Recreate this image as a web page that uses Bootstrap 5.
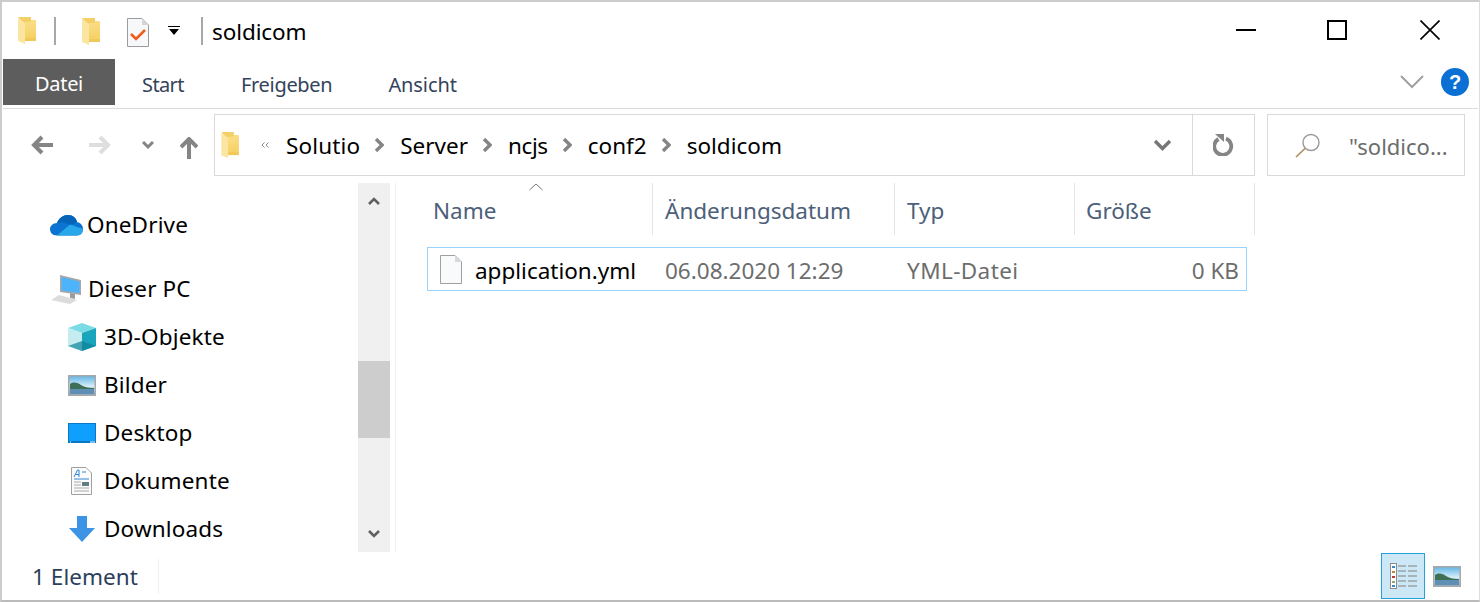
<!DOCTYPE html>
<html lang="de">
<head>
<meta charset="utf-8">
<title>soldicom</title>
<link href="https://cdn.jsdelivr.net/npm/bootstrap@5.3.0/dist/css/bootstrap.min.css" rel="stylesheet">
<style>
html,body{height:602px;overflow:hidden;background:#fff}
body{font-family:"Noto Sans","Open Sans",sans-serif;font-size:22.5px;line-height:30px;color:#000}
.win{width:1480px;height:602px;border-top:2px solid #ccc;border-left:2px solid #ccc;border-bottom:2px solid #bbb;border-right:1px solid #ddd}
svg{display:block;flex:none}
.title-row{height:57px;padding-left:16px}
.qsep{width:2px;height:28px;background:#a8a8a8}
.qsep-a{margin-left:17px}
.qsep-b{margin-left:21px}
.qf2{margin-left:26px;margin-top:3px}
.qdoc{margin-left:26px;margin-top:3px}
.qmenu{margin-left:19px}
.title-txt{margin-left:9px;padding-top:2px;letter-spacing:-.1px}
.winbtns{margin-top:-1px}
.wb-max{margin-left:71px}
.wb-close{margin-left:73px;margin-right:39px}
.tabs{height:46px;padding-left:1px}
.rtab{font-size:20px;color:#33435a;height:46px;padding-top:5px;display:flex;align-items:center;justify-content:center}
.rtab-file{width:112px;background:#5d5d5d;color:#fff;padding-top:3px;letter-spacing:-.3px}
.rt-start{margin-left:27px;letter-spacing:-.6px}
.rt-share{margin-left:57px;letter-spacing:-.3px}
.rt-view{margin-left:56px;letter-spacing:-.1px}
.ribbon-end{margin-right:10px}
.help{margin-left:17px}
.rule{height:1px;background:#dcdcdc;margin:3px 0 0 1px;width:1475px}
.addr-row{height:74px;padding-top:5px}
.navzone{width:212px;height:62px}
.nb-back{margin-left:29px}
.nb-fwd{margin-left:36px}
.nb-more{margin-left:31px}
.nb-up{margin-left:26px;margin-top:6px}
.addr{width:1041px;height:62px;border:1px solid #d9d9d9;padding-left:6px}
.crumb{padding-top:1px}
.crumb-first{margin-left:17px;letter-spacing:.15px}
.crumb-next{margin-left:16px}
.crumb-tight{letter-spacing:-.4px}
.crumb-sep{margin-left:14px}
.dbl{margin-left:21px}
.refresh{width:62px;height:60px;border-left:1px solid #d9d9d9;margin-left:20px}
.search{width:198px;height:62px;border:1px solid #d9d9d9;margin-left:12px;padding-left:27px;color:#6d6d6d;font-size:22px}
.search-txt{margin-left:28px;padding-top:2px}
.body-row{height:369px}
.side{width:356px;padding-top:18px}
.side-item{height:48px;letter-spacing:.15px}
.side-top{padding-left:48px}
.side-sub{padding-left:66px}
.side-gap{margin-top:16px}
.lbl-one{margin-left:4px}
.lbl-pc{margin-left:5px}
.lbl-sub{margin-left:8px}
.ic-doc{margin-left:3px}
.lbl-doc{margin-left:12px}
.ic-dl{margin-left:1px}
.lbl-dl{margin-left:9px}
.sbar{width:32px;background:#f0f0f0}
.sbar-btn{height:36px}
.sbar-thumb{height:77px;background:#cdcdcd;margin-top:142px}
.sbar-fill{flex:1}
.main{padding-left:31px;position:relative;border-left:1px solid #f0f0f0;margin-left:5px}
.hdr{height:52px;color:#4c607a;margin-left:-6px}
.hcell{height:52px;border-right:1px solid #e5e5e5;padding-left:12px;padding-top:13px}
.w1{width:232px}.w2{width:242px}.w3{width:180px}.w4{width:180px;padding-left:11px}
.caret-sort{position:absolute;left:133px;top:0}
.file-row{width:820px;height:44px;margin-top:12px;border:1px solid #99d1ff;padding-left:12px}
.ftext{padding-top:3px}
.fname{width:190px;margin-left:13px}
.fdate{width:242px;color:#6d6d6d}
.ftype{width:172px;color:#6d6d6d;letter-spacing:.4px}
.fsize{width:160px;text-align:right;color:#6d6d6d}
.status{height:48px;padding-left:30px;color:#2b3f5c;letter-spacing:.05px}
.stat-txt{width:127px;height:35px;border-right:1px solid #f0f0f0;display:flex;align-items:center;padding-top:2px}
.view-on{width:44px;height:46px;background:#cce8f6;border:1px solid #26a0da;display:flex;align-items:center;justify-content:center}
.view-gap{margin-right:18px;margin-left:8px}
</style>
</head>
<body>
<svg width="0" height="0" class="position-absolute">
  <defs>
    <linearGradient id="sky" x1="0" y1="0" x2="0" y2="1"><stop offset="0" stop-color="#5fb4e6"/><stop offset=".55" stop-color="#d9eef7"/><stop offset="1" stop-color="#7fa9c8"/></linearGradient>
    <linearGradient id="fold" x1="0" y1="0" x2="0" y2="1"><stop offset="0" stop-color="#fadd85"/><stop offset="1" stop-color="#f5d062"/></linearGradient>
    <symbol id="folder" viewBox="0 0 19 28"><path d="M0 0H13V4H18V23H7V8Z" fill="#f3cf68"/><path d="M13 3H18V23H8Z" fill="url(#fold)"/><path d="M7 5H13V23H7Z" fill="url(#fold)"/><path d="M0 1 7 6V27L0 24Z" fill="#fce5a0"/><path d="M7 21H18V24H7Z" fill="#f0c95a"/></symbol>
    <symbol id="chev" viewBox="0 0 10 14"><path d="M2 1 8 7 2 13" fill="none" stroke="#858585" stroke-width="3.4"/></symbol>
    <symbol id="photo" viewBox="0 0 28 21"><rect x=".75" y=".75" width="26.5" height="19.5" fill="url(#sky)" stroke="#a8a8a8" stroke-width="1.5"/><path d="M2 9C6 6 10 8 13 10S20 13 26 13V15H2Z" fill="#3e7058"/><path d="M2 14H26V19H2Z" fill="#5f8fb4"/></symbol>
  </defs>
</svg>
<div class="win d-flex flex-column">

  <div class="title-row d-flex align-items-center">
    <svg width="19" height="28"><use href="#folder"/></svg>
    <div class="qsep qsep-a"></div>
    <svg class="qf2" width="19" height="28"><use href="#folder"/></svg>
    <svg class="qdoc" width="22" height="29" viewBox="0 0 22 29"><path d="M.5.5H15L21.5 7V28.5H.5Z" fill="#f7f8f9" stroke="#9c9c9c"/><path d="M15 .5V7H21.5Z" fill="#d5d5d5"/><path d="M4 16 9 21 18 12" fill="none" stroke="#f4591c" stroke-width="2.6"/></svg>
    <svg class="qmenu" width="12" height="10" viewBox="0 0 12 10"><path d="M0 0H12V1H0ZM1 3H11L6 9Z" fill="#000"/></svg>
    <div class="qsep qsep-b"></div>
    <div class="title-txt">soldicom</div>
    <div class="winbtns ms-auto d-flex align-items-center">
      <svg width="20" height="20" viewBox="0 0 20 20"><path d="M0 10H20" stroke="#000" stroke-width="2"/></svg>
      <svg class="wb-max" width="20" height="20" viewBox="0 0 20 20"><rect x="1" y="1" width="18" height="18" fill="none" stroke="#000" stroke-width="2"/></svg>
      <svg class="wb-close" width="20" height="20" viewBox="0 0 20 20"><path d="M.5.5 19.5 19.5M19.5.5.5 19.5" stroke="#000" stroke-width="1.6"/></svg>
    </div>
  </div>

  <div class="tabs d-flex align-items-center">
    <div class="rtab rtab-file">Datei</div>
    <div class="rtab rt-start">Start</div>
    <div class="rtab rt-share">Freigeben</div>
    <div class="rtab rt-view">Ansicht</div>
    <div class="ribbon-end ms-auto d-flex align-items-center">
      <svg width="24" height="14" viewBox="0 0 24 14"><path d="M1 1 12 12 23 1" fill="none" stroke="#a0a0a0" stroke-width="2"/></svg>
      <svg class="help" width="28" height="28" viewBox="0 0 28 28"><circle cx="14" cy="14" r="14" fill="#0a70d3"/><text x="14" y="21" text-anchor="middle" font-size="20" font-weight="700" fill="#fff" font-family="Liberation Sans">?</text></svg>
    </div>
  </div>
  <div class="rule"></div>

  <div class="addr-row d-flex">
    <div class="navzone d-flex align-items-center">
      <svg class="nb-back" width="22" height="20" viewBox="0 0 22 20"><path d="M11 2 3 10 11 18M3 10H22" fill="none" stroke="#858585" stroke-width="4"/></svg>
      <svg class="nb-fwd" width="22" height="20" viewBox="0 0 22 20"><path d="M11 2 19 10 11 18M19 10H0" fill="none" stroke="#dedede" stroke-width="4"/></svg>
      <svg class="nb-more" width="12" height="9" viewBox="0 0 12 9"><path d="M1 1 6 6 11 1" fill="none" stroke="#858585" stroke-width="3"/></svg>
      <svg class="nb-up" width="18" height="22" viewBox="0 0 18 22"><path d="M1 10 9 2 17 10M9 3V22" fill="none" stroke="#858585" stroke-width="4"/></svg>
    </div>
    <div class="addr d-flex align-items-center">
      <svg width="19" height="27"><use href="#folder"/></svg>
      <svg class="dbl" width="8" height="6" viewBox="0 0 8 6"><path d="M3.5.5 1 3 3.5 5.5M7.5.5 5 3 7.5 5.5" fill="none" stroke="#8a8a8a"/></svg>
      <div class="crumb crumb-first">Solutio</div>
      <svg class="crumb-sep" width="10" height="14"><use href="#chev"/></svg>
      <div class="crumb crumb-next">Server</div>
      <svg class="crumb-sep" width="10" height="14"><use href="#chev"/></svg>
      <div class="crumb crumb-next crumb-tight">ncjs</div>
      <svg class="crumb-sep" width="10" height="14"><use href="#chev"/></svg>
      <div class="crumb crumb-next">conf2</div>
      <svg class="crumb-sep" width="10" height="14"><use href="#chev"/></svg>
      <div class="crumb crumb-next">soldicom</div>
      <div class="ms-auto d-flex align-items-center">
        <svg width="19" height="12" viewBox="0 0 19 12"><path d="M2 2 9.5 9.5 17 2" fill="none" stroke="#777" stroke-width="3.4"/></svg>
        <div class="refresh d-flex align-items-center justify-content-center">
          <svg width="21" height="22" viewBox="0 0 21 22"><path d="M5.5 5A8.5 8.500 0 1 0 13 4.500" fill="none" stroke="#858585" stroke-width="3.800"/><path d="M2 0H11V8Z" fill="#858585"/></svg>
        </div>
      </div>
    </div>
    <div class="search d-flex align-items-center">
      <svg width="26" height="25" viewBox="0 0 26 25"><circle cx="16" cy="9.5" r="8" fill="none" stroke="#9a9a9a" stroke-width="1.4"/><path d="M10 15.5 1 24" stroke="#b08a5c" stroke-width="1.6"/></svg>
      <div class="search-txt">"soldico...</div>
    </div>
  </div>

  <div class="body-row d-flex">
    <div class="side">
      <div class="side-item side-top d-flex align-items-center">
        <svg width="33" height="21" viewBox="0 0 33 21"><path d="M7 20.5C2 20.5 0 17 0 14S3 8 7 8C9 3 13 0 18 0S26 3 27 7C31 8 33 11 33 14S31 20.500 27 20.500Z" fill="#0a74d0"/><path d="M7 8C9 3 13 0 18 0S26 3 27 7L20 10 13 7Z" fill="#0364b8"/><path d="M7 20.500H27C31 20.500 33 17 33 14L20 9.500Z" fill="#28a8ea"/></svg>
        <div class="lbl-one">OneDrive</div>
      </div>
      <div class="side-item side-top side-gap d-flex align-items-center">
        <svg width="33" height="30" viewBox="0 0 33 30"><path d="M10 1 31 6V21L10 18Z" fill="#a8a8a8"/><path d="M11.5 3 29.5 7.500V19L11.5 16.500Z" fill="#4db3fb"/><path d="M20 19V24L25 25V20Z" fill="#9c9c9c"/><path d="M9 21 1 26 20 30 27 26Z" fill="#dcdcdc"/></svg>
        <div class="lbl-pc">Dieser PC</div>
      </div>
      <div class="side-item side-sub d-flex align-items-center">
        <svg width="28" height="28" viewBox="0 0 28 28"><path d="M14 0 28 5 14 10 0 5Z" fill="#7bdbe5"/><path d="M0 5 14 10V28L0 23Z" fill="#c5edf0"/><path d="M28 5 14 10V28L28 23Z" fill="#19a6bc"/><path d="M14 18 28 23 14 28 0 23Z" fill="#0d8398" opacity=".7"/></svg>
        <div class="lbl-sub">3D-Objekte</div>
      </div>
      <div class="side-item side-sub d-flex align-items-center">
        <svg width="28" height="21"><use href="#photo"/></svg>
        <div class="lbl-sub">Bilder</div>
      </div>
      <div class="side-item side-sub d-flex align-items-center">
        <svg width="28" height="20" viewBox="0 0 28 20"><rect width="28" height="20" fill="#0b78c2"/><rect x="1" y="1" width="26" height="17" fill="#0fa0ff"/><path d="M2 19H3M22 19H27" stroke="#fff"/></svg>
        <div class="lbl-sub">Desktop</div>
      </div>
      <div class="side-item side-sub d-flex align-items-center">
        <svg class="ic-doc" width="21" height="28" viewBox="0 0 21 28"><path d="M.5.5H15L20.5 6V27.500H.5Z" fill="#fbfbfb" stroke="#a0a0a0"/><path d="M3 10 6.5 3H8V10M4.5 7.500H8M11 5H15M3 12H18" stroke="#2f86d2" fill="none"/><path d="M3 15H10M3 18H10M3 21H18M3 24H18" stroke="#a8a8a8"/><rect x="11" y="15" width="7" height="4" fill="#5d7d83"/></svg>
        <div class="lbl-doc">Dokumente</div>
      </div>
      <div class="side-item side-sub d-flex align-items-center">
        <svg class="ic-dl" width="26" height="26" viewBox="0 0 26 26"><path d="M8 0H18V12H26L13 26 0 12H8Z" fill="#3e94e4"/></svg>
        <div class="lbl-dl">Downloads</div>
      </div>
    </div>

    <div class="sbar d-flex flex-column">
      <div class="sbar-btn d-flex align-items-center justify-content-center"><svg width="12" height="8" viewBox="0 0 12 8"><path d="M1 7 6 2 11 7" fill="none" stroke="#606060" stroke-width="2.6"/></svg></div>
      <div class="sbar-thumb"></div>
      <div class="sbar-fill"></div>
      <div class="sbar-btn d-flex align-items-center justify-content-center"><svg width="12" height="8" viewBox="0 0 12 8"><path d="M1 1 6 6 11 1" fill="none" stroke="#606060" stroke-width="2.6"/></svg></div>
    </div>

    <div class="main flex-grow-1">
      <svg class="caret-sort" width="14" height="8" viewBox="0 0 14 8"><path d="M.5 7 7 1 13.5 7" fill="none" stroke="#777"/></svg>
      <div class="hdr d-flex">
        <div class="hcell w1">Name</div>
        <div class="hcell w2">Änderungsdatum</div>
        <div class="hcell w3">Typ</div>
        <div class="hcell w4">Größe</div>
      </div>
      <div class="file-row d-flex align-items-center">
        <svg width="22" height="29" viewBox="0 0 22 29"><path d="M.5.5H15L21.5 7V28.5H.5Z" fill="#f9fafb" stroke="#a0a0a0"/><path d="M15 .5V7H21.5Z" fill="#d9d9d9"/></svg>
        <div class="ftext fname">application.yml</div>
        <div class="ftext fdate">06.08.2020 12:29</div>
        <div class="ftext ftype">YML-Datei</div>
        <div class="ftext fsize">0 KB</div>
      </div>
    </div>
  </div>

  <div class="status d-flex align-items-center">
    <div class="stat-txt">1 Element</div>
    <div class="ms-auto d-flex align-items-center">
      <div class="view-on">
        <svg width="27" height="26" viewBox="0 0 27 26"><rect x=".5" y=".5" width="6" height="25" fill="#fff" stroke="#8c8c8c"/><path d="M2 3H5V5H2Z" fill="#3a88c5"/><path d="M2 8H5V10H2Z" fill="#b58a3a"/><path d="M2 13H5V15H2Z" fill="#c0392b"/><path d="M2 18H5V20H2Z" fill="#8aa86a"/><path d="M2 22H5V24H2Z" fill="#3a88c5"/><path d="M8 3H16M18 3H27M8 8H16M18 8H27M8 13H16M18 13H27M8 18H16M18 18H27M8 23H16M18 23H27" stroke="#808080"/></svg>
      </div>
      <svg class="view-gap" width="28" height="21"><use href="#photo"/></svg>
    </div>
  </div>
</div>
<script src="https://cdn.jsdelivr.net/npm/bootstrap@5.3.0/dist/js/bootstrap.bundle.min.js"></script>
</body>
</html>
